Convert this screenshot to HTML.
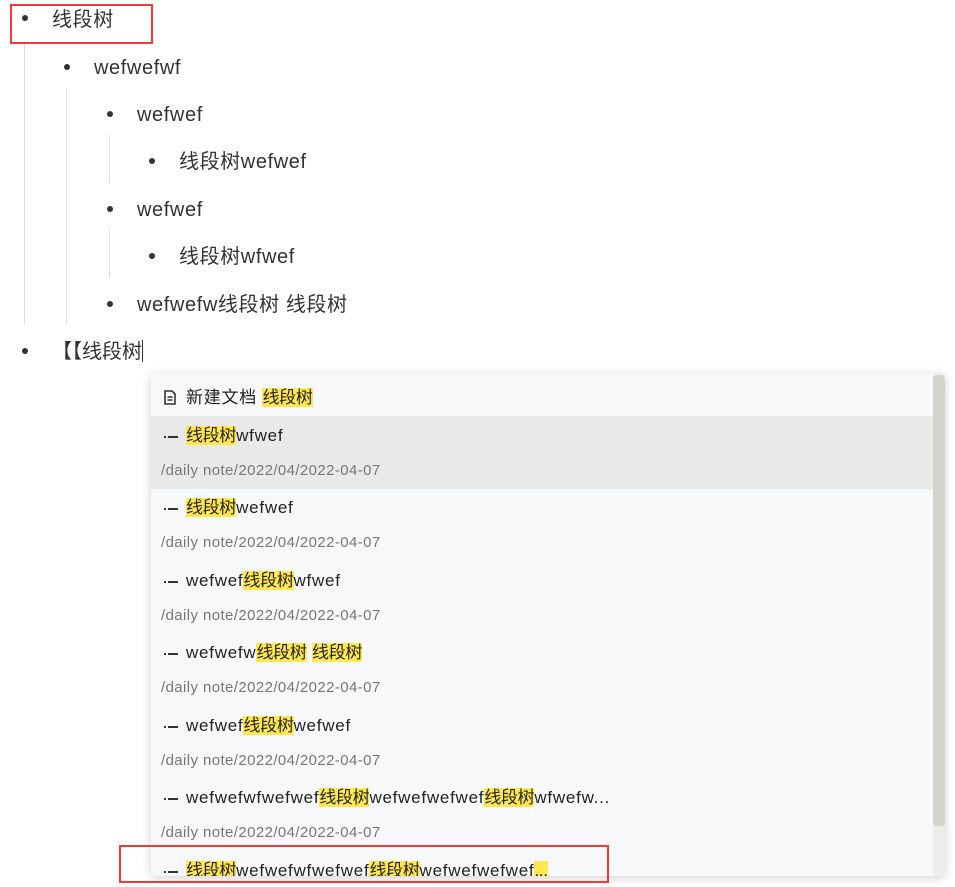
<!DOCTYPE html>
<html><head><meta charset="utf-8"><style>
body{margin:0;width:955px;height:887px;overflow:hidden;background:#fff;font-family:"Liberation Sans","Noto Sans CJK SC",sans-serif;color:#333;position:relative}
.a{position:absolute;white-space:nowrap}
.t{font-size:20px;line-height:24px;letter-spacing:0.6px}
.b{position:absolute;width:6px;height:6px;border-radius:50%;background:#333}
.g{position:absolute;width:1px;background:#ddd}
.red{position:absolute;border:2px solid #f03a3a;box-sizing:border-box}
.pop{position:absolute;left:151px;top:373px;width:794px;height:503px;background:#f7f8fa;border-radius:4px;box-shadow:0 2px 10px rgba(0,0,0,.18);overflow:hidden}
.sel{position:absolute;left:0;top:43px;width:782px;height:73px;background:#e9e9e9}
.sb{position:absolute;left:782px;top:0;width:12px;height:503px;background:#eeede9}
.th{position:absolute;left:782px;top:2px;width:12px;height:451px;background:#d3d2cd;border-radius:4px}
.it{position:absolute;left:35px;font-size:17px;line-height:24px;white-space:nowrap;color:#222;letter-spacing:0.75px}
.p{position:absolute;left:10px;font-size:15px;line-height:20px;color:#777;white-space:nowrap;letter-spacing:0.4px}
.d{position:absolute;left:17px;width:10px;height:2px;background:#333}
.d:before{content:"";position:absolute;left:-4px;top:0;width:2px;height:2px;background:#333}
mark{background:#ffe84f;color:#222;letter-spacing:-0.3px}
</style></head><body>
<div class="b" style="left:22px;top:15px"></div><div class="a t" style="left:52px;top:8px">线段树</div>
<div class="g" style="left:24px;top:42px;height:282px"></div>
<div class="b" style="left:64px;top:64px"></div><div class="a t" style="left:94px;top:56px">wefwefwf</div>
<div class="g" style="left:66px;top:88px;height:236px"></div>
<div class="b" style="left:107px;top:111px"></div><div class="a t" style="left:137px;top:103px">wefwef</div>
<div class="g" style="left:109px;top:135px;height:48px"></div>
<div class="b" style="left:149px;top:158px"></div><div class="a t" style="left:179px;top:150px">线段树wefwef</div>
<div class="b" style="left:107px;top:206px"></div><div class="a t" style="left:137px;top:198px">wefwef</div>
<div class="g" style="left:109px;top:230px;height:48px"></div>
<div class="b" style="left:149px;top:253px"></div><div class="a t" style="left:179px;top:245px">线段树wfwef</div>
<div class="b" style="left:107px;top:301px"></div><div class="a t" style="left:137px;top:293px">wefwefw线段树 线段树</div>
<div class="b" style="left:22px;top:348px"></div><div class="a t" style="left:52px;top:340px;letter-spacing:0">【【线段树<span style="display:inline-block;width:1px;height:22px;background:#333;vertical-align:-4px"></span></div>
<div class="red" style="left:10px;top:4px;width:143px;height:40px"></div>

<div class="pop">
<div class="sel"></div>
<div class="sb"></div><div class="th"></div>
<svg style="position:absolute;left:13px;top:17px" width="12" height="15" viewBox="0 0 12 15"><path d="M1 1h7l3 3v10H1z" fill="none" stroke="#333" stroke-width="1.6"/><path d="M3.5 7h5M3.5 10h5" stroke="#333" stroke-width="1.4"/></svg>
<div class="it" style="top:13px">新建文档 <mark>线段树</mark></div>

<div class="d" style="top:63px"></div><div class="it" style="top:51px"><mark>线段树</mark>wfwef</div>
<div class="p" style="top:88px">/daily note/2022/04/2022-04-07</div>
<div class="d" style="top:135px"></div><div class="it" style="top:123px"><mark>线段树</mark>wefwef</div>
<div class="p" style="top:160px">/daily note/2022/04/2022-04-07</div>
<div class="d" style="top:208px"></div><div class="it" style="top:196px">wefwef<mark>线段树</mark>wfwef</div>
<div class="p" style="top:233px">/daily note/2022/04/2022-04-07</div>
<div class="d" style="top:280px"></div><div class="it" style="top:268px">wefwefw<mark>线段树</mark> <mark>线段树</mark></div>
<div class="p" style="top:305px">/daily note/2022/04/2022-04-07</div>
<div class="d" style="top:353px"></div><div class="it" style="top:341px">wefwef<mark>线段树</mark>wefwef</div>
<div class="p" style="top:378px">/daily note/2022/04/2022-04-07</div>
<div class="d" style="top:425px"></div><div class="it" style="top:413px">wefwefwfwefwef<mark>线段树</mark>wefwefwefwef<mark>线段树</mark>wfwefw...</div>
<div class="p" style="top:450px">/daily note/2022/04/2022-04-07</div>
<div class="d" style="top:498px"></div><div class="it" style="top:486px"><mark>线段树</mark>wefwefwfwefwef<mark>线段树</mark>wefwefwefwef<mark>...</mark></div>
</div>
<div class="red" style="left:119px;top:845px;width:490px;height:38px"></div>
</body></html>
